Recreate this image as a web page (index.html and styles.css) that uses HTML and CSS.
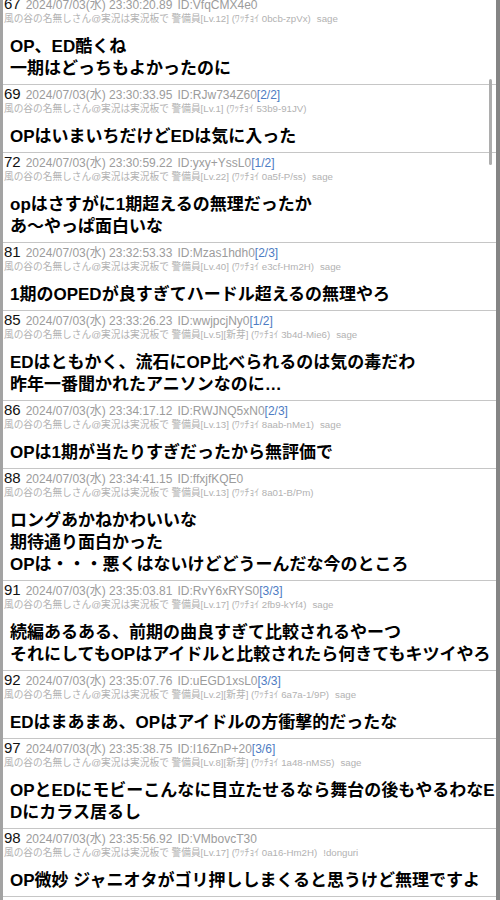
FILE: index.html
```html
<!DOCTYPE html>
<html lang="ja">
<head>
  <meta charset="UTF-8">
  <meta name="viewport" content="width=device-width, initial-scale=1.0">
  <title>実況スレ</title>
  <link rel="stylesheet" href="styles.css">
</head>
<body>
  <div class="thread">
    <div class="res-list">
      <article class="res">
        <div class="res-head"><span class="res-num">67</span><span class="res-date">2024/07/03(水) 23:30:20.89</span><span class="res-id">ID:VfqCMX4e0</span></div>
        <div class="res-name">風の谷の名無しさん@実況は実況板で 警備員[Lv.12] (ﾜｯﾁｮｲ 0bcb-zpVx)<span class="res-mail">sage</span></div>
        <div class="res-body">OP、ED酷くね<br>一期はどっちもよかったのに</div>
      </article>

      <article class="res">
        <div class="res-head"><span class="res-num">69</span><span class="res-date">2024/07/03(水) 23:30:33.95</span><span class="res-id">ID:RJw734Z60<span class="res-count">[2/2]</span></span></div>
        <div class="res-name">風の谷の名無しさん@実況は実況板で 警備員[Lv.1] (ﾜｯﾁｮｲ 53b9-91JV)</div>
        <div class="res-body">OPはいまいちだけどEDは気に入った</div>
      </article>

      <article class="res">
        <div class="res-head"><span class="res-num">72</span><span class="res-date">2024/07/03(水) 23:30:59.22</span><span class="res-id">ID:yxy+YssL0<span class="res-count">[1/2]</span></span></div>
        <div class="res-name">風の谷の名無しさん@実況は実況板で 警備員[Lv.22] (ﾜｯﾁｮｲ 0a5f-P/ss)<span class="res-mail">sage</span></div>
        <div class="res-body">opはさすがに1期超えるの無理だったか<br>あ〜やっぱ面白いな</div>
      </article>

      <article class="res">
        <div class="res-head"><span class="res-num">81</span><span class="res-date">2024/07/03(水) 23:32:53.33</span><span class="res-id">ID:Mzas1hdh0<span class="res-count">[2/3]</span></span></div>
        <div class="res-name">風の谷の名無しさん@実況は実況板で 警備員[Lv.40] (ﾜｯﾁｮｲ e3cf-Hm2H)<span class="res-mail">sage</span></div>
        <div class="res-body">1期のOPEDが良すぎてハードル超えるの無理やろ</div>
      </article>

      <article class="res">
        <div class="res-head"><span class="res-num">85</span><span class="res-date">2024/07/03(水) 23:33:26.23</span><span class="res-id">ID:wwjpcjNy0<span class="res-count">[1/2]</span></span></div>
        <div class="res-name">風の谷の名無しさん@実況は実況板で 警備員[Lv.5][新芽] (ﾜｯﾁｮｲ 3b4d-Mie6)<span class="res-mail">sage</span></div>
        <div class="res-body">EDはともかく、流石にOP比べられるのは気の毒だわ<br>昨年一番聞かれたアニソンなのに…</div>
      </article>

      <article class="res">
        <div class="res-head"><span class="res-num">86</span><span class="res-date">2024/07/03(水) 23:34:17.12</span><span class="res-id">ID:RWJNQ5xN0<span class="res-count">[2/3]</span></span></div>
        <div class="res-name">風の谷の名無しさん@実況は実況板で 警備員[Lv.13] (ﾜｯﾁｮｲ 8aab-nMe1)<span class="res-mail">sage</span></div>
        <div class="res-body">OPは1期が当たりすぎだったから無評価で</div>
      </article>

      <article class="res">
        <div class="res-head"><span class="res-num">88</span><span class="res-date">2024/07/03(水) 23:34:41.15</span><span class="res-id">ID:ffxjfKQE0</span></div>
        <div class="res-name">風の谷の名無しさん@実況は実況板で 警備員[Lv.13] (ﾜｯﾁｮｲ 8a01-B/Pm)</div>
        <div class="res-body">ロングあかねかわいいな<br>期待通り面白かった<br>OPは・・・悪くはないけどどうーんだな今のところ</div>
      </article>

      <article class="res">
        <div class="res-head"><span class="res-num">91</span><span class="res-date">2024/07/03(水) 23:35:03.81</span><span class="res-id">ID:RvY6xRYS0<span class="res-count">[3/3]</span></span></div>
        <div class="res-name">風の谷の名無しさん@実況は実況板で 警備員[Lv.17] (ﾜｯﾁｮｲ 2fb9-kYf4)<span class="res-mail">sage</span></div>
        <div class="res-body">続編あるある、前期の曲良すぎて比較されるやーつ<br>それにしてもOPはアイドルと比較されたら何きてもキツイやろ</div>
      </article>

      <article class="res">
        <div class="res-head"><span class="res-num">92</span><span class="res-date">2024/07/03(水) 23:35:07.76</span><span class="res-id">ID:uEGD1xsL0<span class="res-count">[3/3]</span></span></div>
        <div class="res-name">風の谷の名無しさん@実況は実況板で 警備員[Lv.2][新芽] (ﾜｯﾁｮｲ 6a7a-1/9P)<span class="res-mail">sage</span></div>
        <div class="res-body">EDはまあまあ、OPはアイドルの方衝撃的だったな</div>
      </article>

      <article class="res">
        <div class="res-head"><span class="res-num">97</span><span class="res-date">2024/07/03(水) 23:35:38.75</span><span class="res-id">ID:I16ZnP+20<span class="res-count">[3/6]</span></span></div>
        <div class="res-name">風の谷の名無しさん@実況は実況板で 警備員[Lv.8][新芽] (ﾜｯﾁｮｲ 1a48-nMS5)<span class="res-mail">sage</span></div>
        <div class="res-body">OPとEDにモビーこんなに目立たせるなら舞台の後もやるわなEDにカラス居るし</div>
      </article>

      <article class="res">
        <div class="res-head"><span class="res-num">98</span><span class="res-date">2024/07/03(水) 23:35:56.92</span><span class="res-id">ID:VMbovcT30</span></div>
        <div class="res-name">風の谷の名無しさん@実況は実況板で 警備員[Lv.17] (ﾜｯﾁｮｲ 0a16-Hm2H)<span class="res-mail">!donguri</span></div>
        <div class="res-body">OP微妙 ジャニオタがゴリ押ししまくると思うけど無理ですよ</div>
      </article>
    </div>

    <div class="scroll-thumb"></div>
  </div>
</body>
</html>
```

FILE: styles.css
```css
body {
  margin: 0;
  background-color: #fff;
  color: #000;
  font-family: "Liberation Sans", "Noto Sans CJK JP", sans-serif;
  height: 100vh;
  overflow: hidden;
}

.thread {
  position: relative;
  height: 100%;
  border-left: 3px solid #a3a3a3;
  border-right: 4px solid #858585;
  overflow: hidden;
}

/* list is scrolled a little, first post's header is cut at the top */
.res-list {
  margin-top: -5px;
}

.res {
  padding: 0 0 4px 1px;
  border-bottom: 1px solid #c6c6c6;
}

.res-head {
  height: 18px;
  line-height: 18px;
  white-space: nowrap;
}

.res-num {
  font-size: 15px;
  color: #111;
}

.res-date,
.res-id {
  font-size: 12px;
  line-height: 12px;
  color: #9c9c9c;
  margin-left: 5px;
}

.res-count {
  color: #4d7cc3;
}

.res-name {
  font-size: 9.7px;
  line-height: 12px;
  height: 12px;
  color: #b2b2b2;
  white-space: nowrap;
}

.res-mail {
  margin-left: 6px;
}

.res-body {
  margin-top: 11px;
  padding-left: 6px;
  font-size: 17px;
  font-weight: bold;
  line-height: 22px;
  word-break: break-all;
}

.scroll-thumb {
  position: absolute;
  top: 79px;
  right: 4px;
  width: 3px;
  height: 86px;
  border-radius: 2px;
  background-color: #adadad;
}
```
